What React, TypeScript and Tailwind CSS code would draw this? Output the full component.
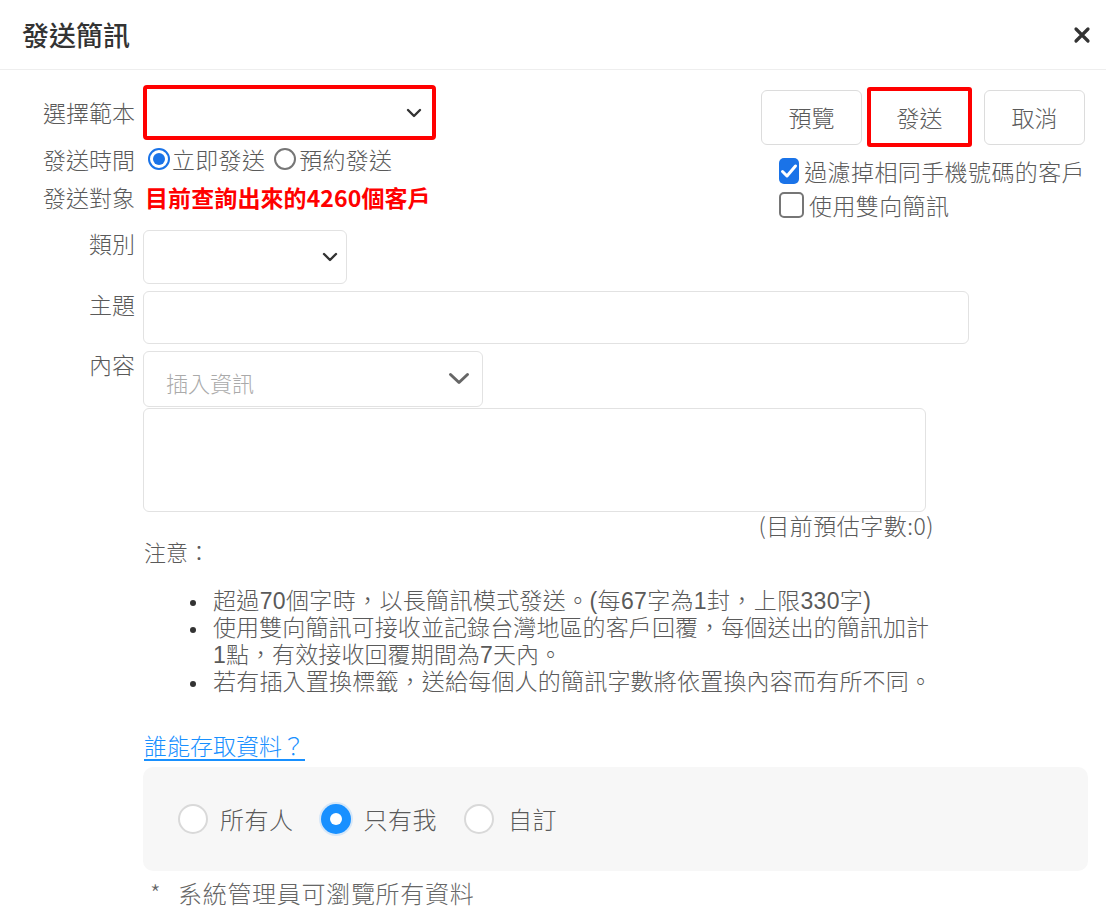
import React from "react";

const SmallChevron = () => (
  <svg width="16" height="10" viewBox="0 0 16 10" fill="none">
    <path d="M2 2 L8 8 L14 2" stroke="#333" strokeWidth="2.4" strokeLinecap="round" strokeLinejoin="round" />
  </svg>
);

const BigChevron = () => (
  <svg width="22" height="13" viewBox="0 0 22 13" fill="none">
    <path d="M2.5 2.5 L11 10.5 L19.5 2.5" stroke="#666" strokeWidth="3" strokeLinecap="round" strokeLinejoin="round" />
  </svg>
);

export default function App() {
  return (
    <div className="w-[1106px] h-[920px] bg-white text-[#5a5a5a] font-light font-['Noto_Sans_CJK_TC',sans-serif] overflow-hidden">
      {/* Header */}
      <div className="h-[70px] flex items-center justify-between pl-[22px] pr-[15px] border-b border-[#eeeeee]">
        <div className="text-[27px] font-medium text-[#333] leading-none">發送簡訊</div>
        <svg width="18" height="18" viewBox="0 0 18 18">
          <path d="M3 3 L15 15 M15 3 L3 15" stroke="#333" strokeWidth="3.2" strokeLinecap="round" />
        </svg>
      </div>

      {/* Top section */}
      <div className="flex justify-between">
        <div className="pt-[15px]">
          <div className="flex items-center h-[55px]">
            <div className="w-[135px] text-right text-[23px]">選擇範本</div>
            <div className="ml-[8px] w-[293px] h-[55px] border-[4px] border-[#ff0000] rounded-[4px] flex items-center justify-end pr-[10px]">
              <SmallChevron />
            </div>
          </div>
          <div className="flex items-center h-[38px]">
            <div className="w-[135px] text-right text-[23px]">發送時間</div>
            <div className="ml-[13px] flex items-center text-[23px] tracking-[0.3px]">
              <span className="w-[22px] h-[22px] rounded-full border-2 border-[#1a73e8] flex items-center justify-center">
                <span className="w-[12px] h-[12px] rounded-full bg-[#1a73e8]" />
              </span>
              <span className="ml-[2px]">立即發送</span>
              <span className="ml-[9px] w-[22px] h-[22px] rounded-full border-2 border-[#767676]" />
              <span className="ml-[3px]">預約發送</span>
            </div>
          </div>
          <div className="flex items-center h-[38px]">
            <div className="w-[135px] text-right text-[23px]">發送對象</div>
            <div className="ml-[10px] text-[23px] font-bold text-[#ff0000] tracking-[0.1px]">目前查詢出來的4260個客戶</div>
          </div>
        </div>

        <div className="w-[345px] shrink-0 pt-[17px] pr-[21px]">
          <div className="flex items-center">
            <div className="w-[101px] h-[55px] border border-[#dcdcdc] rounded-[6px] flex items-center justify-center text-[23px]">預覽</div>
            <div className="ml-[5px] w-[105px] h-[60px] border-[4px] border-[#ff0000] rounded-[3px] flex items-center justify-center text-[23px]">發送</div>
            <div className="ml-[12px] w-[101px] h-[55px] border border-[#dcdcdc] rounded-[6px] flex items-center justify-center text-[23px]">取消</div>
          </div>
          <div className="ml-[18px] mt-[7px] whitespace-nowrap">
            <div className="flex items-center h-[34px]">
              <span className="w-[25px] h-[26px] rounded-[5px] bg-[#1a73e8] flex items-center justify-center">
                <svg width="18" height="16" viewBox="0 0 18 16" fill="none">
                  <path d="M2.5 8.5 L7 13 L15.5 3" stroke="white" strokeWidth="3" strokeLinecap="round" strokeLinejoin="round" />
                </svg>
              </span>
              <span className="ml-[5px] text-[23px] tracking-[0.4px]">過濾掉相同手機號碼的客戶</span>
            </div>
            <div className="flex items-center h-[34px]">
              <span className="w-[25px] h-[26px] rounded-[5px] border-2 border-[#767676] bg-white" />
              <span className="ml-[5px] text-[23px] tracking-[0.4px]">使用雙向簡訊</span>
            </div>
          </div>
        </div>
      </div>

      {/* Form rows */}
      <div className="mt-[8px] flex items-start">
        <div className="w-[135px] text-right text-[23px] leading-[26px]">類別</div>
        <div className="ml-[8px] w-[204px] h-[54px] border border-[#e2e2e2] rounded-[6px] flex items-center justify-end pr-[8px]">
          <SmallChevron />
        </div>
      </div>
      <div className="mt-[7px] flex items-start">
        <div className="w-[135px] text-right text-[23px] leading-[26px]">主題</div>
        <div className="ml-[8px] w-[826px] h-[53px] border border-[#e2e2e2] rounded-[6px]" />
      </div>
      <div className="mt-[7px] flex items-start">
        <div className="w-[135px] text-right text-[23px] leading-[26px]">內容</div>
        <div className="ml-[8px]">
          <div className="w-[340px] h-[56px] border border-[#e2e2e2] rounded-[6px] flex items-center justify-between pl-[22px] pr-[12px] pt-[6px]">
            <span className="text-[22px] text-[#aaaaaa]">插入資訊</span>
            <span className="-mt-[8px]"><BigChevron /></span>
          </div>
          <div className="mt-[1px] w-[783px] h-[104px] border border-[#e2e2e2] rounded-[6px]" />
          <div className="w-[791px] text-right text-[23px] leading-[26px] tracking-[0.5px]">(目前預估字數:0)</div>
        </div>
      </div>

      <div className="pl-[143px]">
        <div className="text-[22px] leading-[26px] ml-[1px]">注意：</div>
        <ul className="mt-[24px] text-[23px] leading-[27px] text-[#5a5a5a] font-['Liberation_Sans','Noto_Sans_CJK_TC',sans-serif] whitespace-nowrap">
          <li className="flex">
            <span className="w-[70px] flex justify-end pr-[17px] pt-[12px]"><span className="w-[6px] h-[6px] rounded-full bg-[#333]" /></span>
            <span className="tracking-[0.35px]">超過70個字時，以長簡訊模式發送。(每67字為1封，上限330字)</span>
          </li>
          <li className="flex">
            <span className="w-[70px] flex justify-end pr-[17px] pt-[12px]"><span className="w-[6px] h-[6px] rounded-full bg-[#333]" /></span>
            <span className="tracking-[0.1px]">使用雙向簡訊可接收並記錄台灣地區的客戶回覆，每個送出的簡訊加計<br />1點，有效接收回覆期間為7天內。</span>
          </li>
          <li className="flex">
            <span className="w-[70px] flex justify-end pr-[17px] pt-[12px]"><span className="w-[6px] h-[6px] rounded-full bg-[#333]" /></span>
            <span className="tracking-[0.2px]">若有插入置換標籤，送給每個人的簡訊字數將依置換內容而有所不同。</span>
          </li>
        </ul>

        <div className="mt-[36px] text-[23px] leading-[26px] ml-[1px]">
          <span className="text-[#1890ff] underline underline-offset-[4px]">誰能存取資料？</span>
        </div>

        <div className="mt-[9px] w-[945px] h-[104px] bg-[#f7f7f7] rounded-[10px] flex items-center pl-[35px] text-[24px] text-[#5a5a5a]">
          <span className="w-[30px] h-[30px] rounded-full border-2 border-[#d9d9d9] bg-white" />
          <span className="ml-[12px] tracking-[0.5px]">所有人</span>
          <span className="ml-[27px] w-[30px] h-[30px] rounded-full bg-[#1890ff] flex items-center justify-center shadow-[0_0_0_2px_rgba(24,144,255,0.15)]">
            <span className="w-[12px] h-[12px] rounded-full bg-white" />
          </span>
          <span className="ml-[13px] tracking-[0.5px]">只有我</span>
          <span className="ml-[27px] w-[30px] h-[30px] rounded-full border-2 border-[#d9d9d9] bg-white" />
          <span className="ml-[14px] tracking-[0.5px]">自訂</span>
        </div>

        <div className="mt-[9px] text-[24px] leading-[26px] text-[#666] flex">
          <span className="ml-[7px] w-[28px]">*</span>
          <span className="tracking-[0.7px]">系統管理員可瀏覽所有資料</span>
        </div>
      </div>
    </div>
  );
}
